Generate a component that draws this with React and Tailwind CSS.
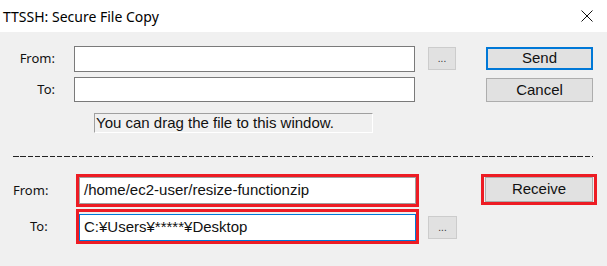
import React from "react";

const ui = { fontFamily: '"Liberation Sans", Arial, sans-serif' };
const sys = { fontFamily: '"Noto Sans", "Liberation Sans", sans-serif' };

function Label({ children, className }) {
	return (
		<div className={"flex items-center text-[13px] text-[#111] " + className} style={sys}>
			{children}
		</div>
	);
}

function Button({ children, className, focused }) {
	return (
		<div
			className={
				"flex items-center justify-center bg-[#e1e1e1] text-[15px] text-[#111] " +
				(focused ? "border-2 border-[#0078d7] " : "border border-[#adadad] ") +
				className
			}
			style={ui}
		>
			{children}
		</div>
	);
}

function DotsButton({ className }) {
	return (
		<div
			className={
				"flex items-end justify-center pb-[5px] bg-[#e1e1e1] border border-[#cccccc] text-[10px] leading-none text-[#333] " +
				className
			}
			style={ui}
		>
			...
		</div>
	);
}

function Field({ value, className, focused }) {
	return (
		<div
			className={
				"flex items-center bg-white pl-[4px] text-[15px] text-[#111] whitespace-nowrap overflow-hidden " +
				(focused ? "border border-[#0078d7] " : "border border-[#7a7a7a] ") +
				className
			}
			style={ui}
		>
			{value}
		</div>
	);
}

export default function App() {
	return (
		<div className="w-[607px] h-[266px] flex flex-col bg-[#f0f0f0] overflow-hidden">
			{/* title bar */}
			<div className="h-[32px] bg-white flex items-center justify-between pl-[3px] pr-[14px]">
				<span className="text-[14px] text-black" style={sys}>
					TTSSH: Secure File Copy
				</span>
				<svg width="12" height="12" viewBox="0 0 12 12">
					<path d="M0.5 0.5 L11.5 11.5 M11.5 0.5 L0.5 11.5" stroke="#111" strokeWidth="1" fill="none" />
				</svg>
			</div>

			{/* send section */}
			<div className="flex items-start mt-[14px]">
				<Label className="w-[55px] h-[26px] justify-end">From:</Label>
				<Field className="ml-[19px] w-[341px] h-[26px]" value="" />
				<DotsButton className="ml-[13px] mt-[1px] w-[28px] h-[23px]" />
				<Button focused className="ml-[30px] mt-[1px] w-[107px] h-[23px]">
					Send
				</Button>
			</div>
			<div className="flex items-start mt-[5px]">
				<Label className="w-[55px] h-[25px] justify-end">To:</Label>
				<Field className="ml-[19px] w-[341px] h-[25px]" value="" />
				<Button className="ml-[71px] mt-[1px] w-[107px] h-[24px]">Cancel</Button>
			</div>
			<div
				className="ml-[94px] mt-[11px] w-[279px] h-[20px] flex items-center pl-[1px] border border-t-[#a0a0a0] border-l-[#a0a0a0] border-b-white border-r-white text-[15px] text-[#111]"
				style={ui}
			>
				You can drag the file to this window.
			</div>

			{/* separator */}
			<div className="ml-[13px] mt-[23px] w-[580px] h-[1px] bg-[repeating-linear-gradient(to_right,#222_0px,#222_5.5px,transparent_5.5px,transparent_7.33px)]" />

			{/* receive section */}
			<div className="flex items-start mt-[17px]">
				<Label className="w-[76px] h-[33px] pl-[13px]">From:</Label>
				<div className="w-[343px] h-[33px] border-[3px] border-[#ed1c24] flex">
					<Field className="w-full h-full border-[#a0a0a0]" value="/home/ec2-user/resize-functionzip" />
				</div>
				<div className="ml-[62px] w-[116px] h-[31px] border-[3px] border-[#ed1c24] px-[1px] flex">
					<Button className="w-full h-full">Receive</Button>
				</div>
			</div>
			<div className="flex items-start mt-[2px]">
				<Label className="w-[76px] h-[35px] pl-[30px]">To:</Label>
				<div className="w-[343px] h-[35px] border-[3px] border-[#ed1c24] flex pt-[2px]">
					<Field focused className="w-full h-[27px]" value="C:¥Users¥*****¥Desktop" />
				</div>
				<DotsButton className="ml-[9px] mt-[7px] w-[29px] h-[23px]" />
			</div>
		</div>
	);
}
